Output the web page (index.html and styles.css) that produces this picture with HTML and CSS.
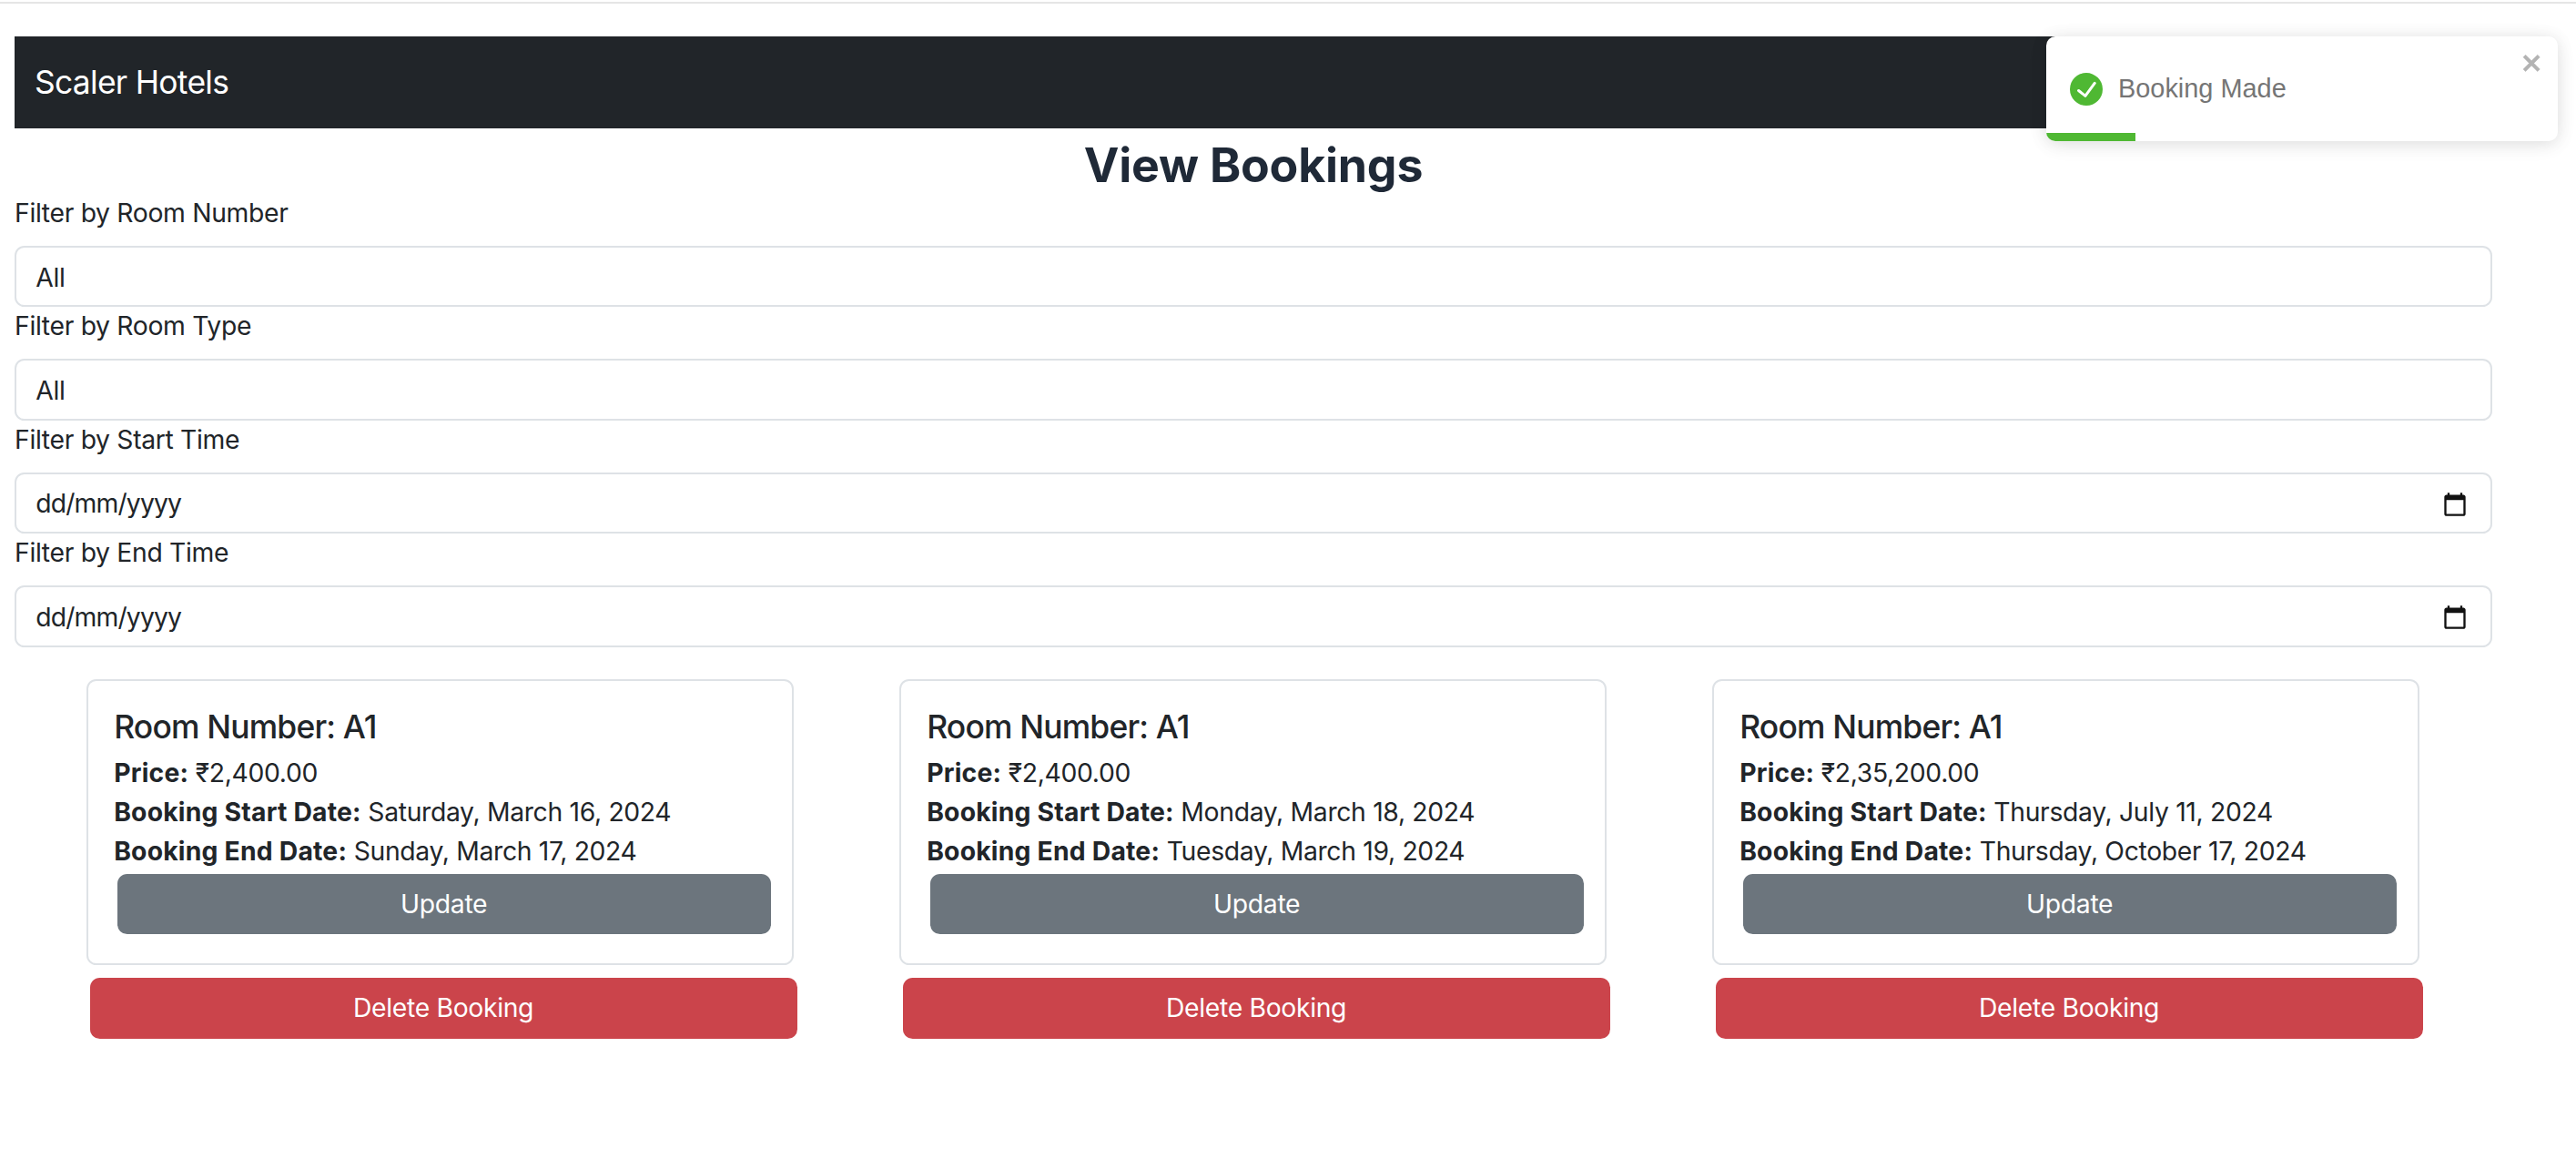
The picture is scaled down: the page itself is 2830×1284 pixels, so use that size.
FILE: index.html

```html
<!DOCTYPE html>
<html lang="en">
<head>
  <meta charset="UTF-8">
  <meta name="viewport" content="width=device-width, initial-scale=1.0">
  <title>Scaler Hotels</title>
  <link rel="stylesheet" href="styles.css">
</head>
<body>
  <div class="top-line"></div>
  <div class="page">
    <nav class="navbar">Scaler Hotels</nav>
    <h1>View Bookings</h1>

    <label for="room_number">Filter by Room Number</label>
    <select id="room_number" class="control">
      <option>All</option>
    </select>

    <label for="room_type">Filter by Room Type</label>
    <select id="room_type" class="control">
      <option>All</option>
    </select>

    <label>Filter by Start Time</label>
    <div class="control date-control">
      <span>dd/mm/yyyy</span>
      <svg class="calendar" viewBox="0 0 24 24"><path d="M20 3h-1V1h-2v2H7V1H5v2H4c-1.1 0-2 .9-2 2v16c0 1.1.9 2 2 2h16c1.1 0 2-.9 2-2V5c0-1.1-.9-2-2-2zm0 18H4V8h16v13z"/></svg>
    </div>

    <label>Filter by End Time</label>
    <div class="control date-control">
      <span>dd/mm/yyyy</span>
      <svg class="calendar" viewBox="0 0 24 24"><path d="M20 3h-1V1h-2v2H7V1H5v2H4c-1.1 0-2 .9-2 2v16c0 1.1.9 2 2 2h16c1.1 0 2-.9 2-2V5c0-1.1-.9-2-2-2zm0 18H4V8h16v13z"/></svg>
    </div>

    <div class="bookings">
      <div class="booking">
        <div class="card">
          <h5>Room Number: A1</h5>
          <p><b>Price:</b> ₹2,400.00</p>
          <p><b>Booking Start Date:</b> Saturday, March 16, 2024</p>
          <p><b>Booking End Date:</b> Sunday, March 17, 2024</p>
          <button class="btn btn-update">Update</button>
        </div>
        <button class="btn btn-delete">Delete Booking</button>
      </div>

      <div class="booking">
        <div class="card">
          <h5>Room Number: A1</h5>
          <p><b>Price:</b> ₹2,400.00</p>
          <p><b>Booking Start Date:</b> Monday, March 18, 2024</p>
          <p><b>Booking End Date:</b> Tuesday, March 19, 2024</p>
          <button class="btn btn-update">Update</button>
        </div>
        <button class="btn btn-delete">Delete Booking</button>
      </div>

      <div class="booking">
        <div class="card">
          <h5>Room Number: A1</h5>
          <p><b>Price:</b> ₹2,35,200.00</p>
          <p><b>Booking Start Date:</b> Thursday, July 11, 2024</p>
          <p><b>Booking End Date:</b> Thursday, October 17, 2024</p>
          <button class="btn btn-update">Update</button>
        </div>
        <button class="btn btn-delete">Delete Booking</button>
      </div>
    </div>
  </div>

  <!-- toast -->
  <div class="toast">
    <svg class="toast-icon" viewBox="0 0 24 24"><path d="M12 0a12 12 0 1012 12A12.014 12.014 0 0012 0zm6.927 8.2l-6.845 9.289a1.011 1.011 0 01-1.43.188l-4.888-3.908a1 1 0 111.25-1.562l4.076 3.261 6.227-8.451a1 1 0 111.61 1.183z"/></svg>
    <span>Booking Made</span>
    <svg class="toast-close" viewBox="0 0 14 16"><path d="M7.71 8.23l3.75 3.75-1.48 1.48-3.75-3.75-3.75 3.75L1 11.98l3.75-3.75L1 4.48 2.48 3l3.75 3.75L9.98 3l1.48 1.48-3.75 3.75z"/></svg>
    <div class="toast-progress"></div>
  </div>
</body>
</html>
```

FILE: styles.css

```css
html {
  font-size: 28.32px;
}
body {
  margin: 0;
  font-family: Inter, "Noto Sans", sans-serif;
  line-height: 1.5;
  letter-spacing: -0.33px;
  color: #212529;
  background: white;
}
.top-line {
  height: 2px;
  margin-top: 2px;
  background: #e5e5e5;
}
.page {
  width: 2722px;
  margin-left: 16px;
  padding-top: 36px;
}
.navbar {
  height: 101px;
  padding-left: 22px;
  display: flex;
  align-items: center;
  box-sizing: border-box;
  background: #212529;
  color: white;
  font-size: 1.25rem;
  letter-spacing: -0.7px;
}
h1 {
  margin: 0;
  height: 68px;
  padding-top: 4px;
  text-align: center;
  font-size: 51.8px;
  line-height: 72px;
  font-weight: 700;
  letter-spacing: -0.2px;
  color: #1f2937;
}
label {
  display: block;
  margin-bottom: 14.5px;
}
.control {
  display: block;
  width: 100%;
  height: 67.5px;
  padding: 2px 0.75rem 0;
  box-sizing: border-box;
  border: 2px solid #dee2e6;
  border-radius: 0.375rem;
  background: white;
  color: #212529;
  font-family: inherit;
  font-size: 1rem;
  letter-spacing: inherit;
  appearance: none;
}
.date-control {
  display: flex;
  align-items: center;
  justify-content: space-between;
  padding-right: 25px;
  letter-spacing: -0.85px;
}
.calendar {
  width: 28px;
  height: 28px;
  fill: #111;
}
.bookings {
  display: grid;
  grid-template-columns: repeat(3, 782px);
  column-gap: 111px;
  margin-top: 35px;
  margin-left: 79.2px;
}
.card {
  width: 777px;
  height: 314px;
  padding: 30px 28px 0 28px;
  box-sizing: border-box;
  border: 2px solid #dee2e6;
  border-radius: 0.375rem;
}
h5 {
  margin: 0 0 8px;
  font-size: 1.25rem;
  line-height: 1.2;
  font-weight: 500;
  letter-spacing: -0.8px;
}
p {
  margin: 0;
  height: 43px;
}
b {
  font-weight: 700;
  letter-spacing: 0.2px;
}
.btn {
  display: block;
  height: 66px;
  border: 0;
  border-radius: 0.375rem;
  color: white;
  font-family: inherit;
  font-size: 1rem;
  letter-spacing: -0.33px;
}
.btn-update {
  width: 718px;
  margin: 2.5px 0 0 3.5px;
  background: #6c757d;
}
.btn-delete {
  width: 777px;
  height: 67px;
  margin: 14px 0 0 3.4px;
  background: #cb444b;
}
.toast {
  position: absolute;
  top: 40px;
  left: 2248px;
  width: 562px;
  height: 115px;
  padding: 0 26px 0;
  box-sizing: border-box;
  display: flex;
  align-items: center;
  background: white;
  border-radius: 10px;
  box-shadow: 0 2px 18px rgba(0,0,0,0.1), 0 4px 26px rgba(0,0,0,0.05);
  overflow: hidden;
  font-family: "Liberation Sans", Arial, sans-serif;
  font-size: 28.9px;
  letter-spacing: 0;
  color: #757575;
}
.toast-icon {
  width: 36px;
  height: 36px;
  margin-right: 17px;
  fill: #4fb833;
}
.toast-close {
  position: absolute;
  top: 15px;
  right: 15px;
  width: 25px;
  height: 28px;
  fill: #b3b3b3;
  stroke: #b3b3b3;
  stroke-width: 0.3;
}
.toast-progress {
  position: absolute;
  left: 0;
  bottom: 0;
  width: 98px;
  height: 9px;
  background: #4fb833;
}
```
